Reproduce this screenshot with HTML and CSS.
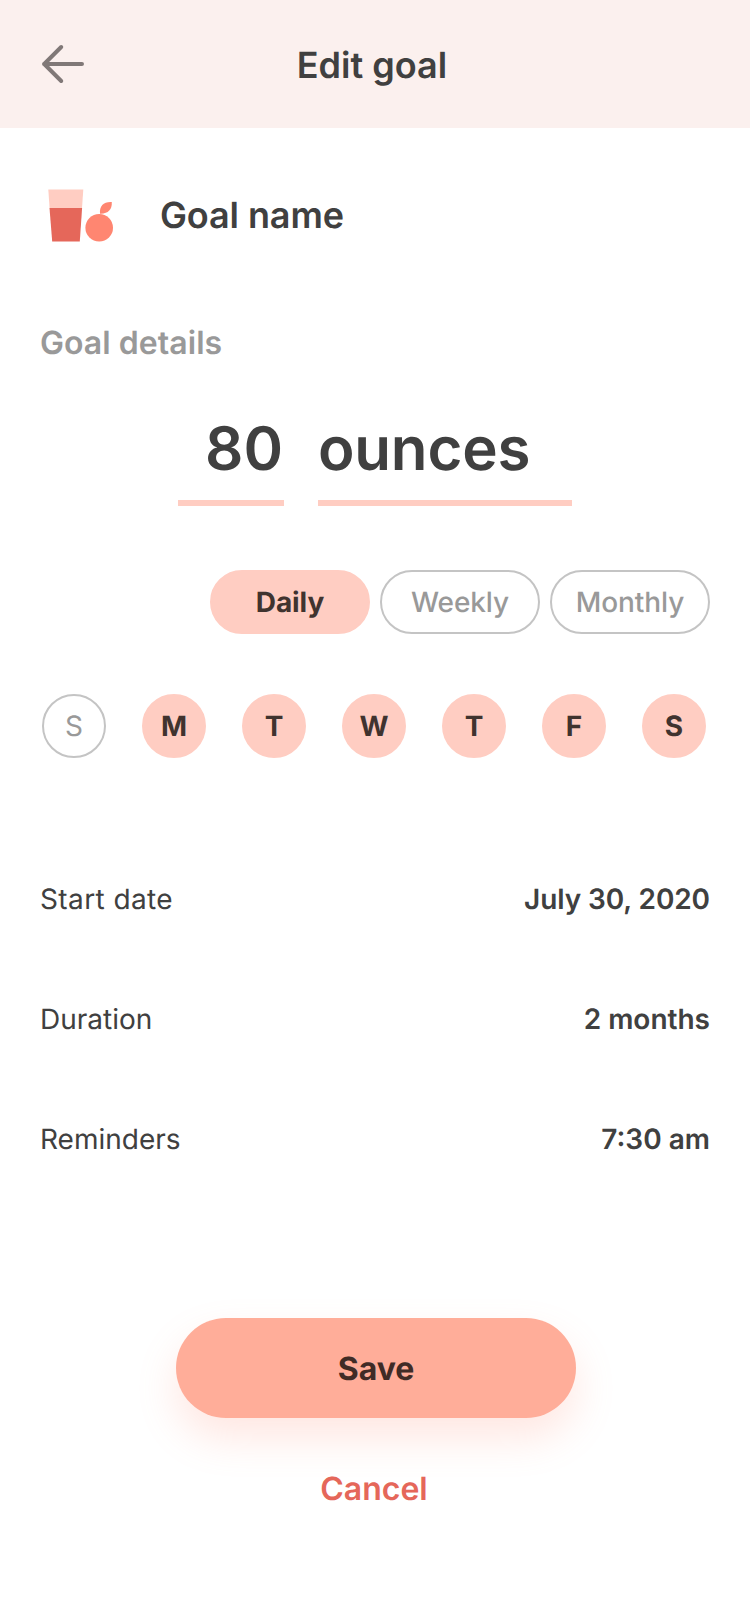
FILE: index.html
```html
<!DOCTYPE html>
<html lang="en">
<head>
<meta charset="utf-8">
<title>Edit goal</title>
<link rel="stylesheet" href="styles.css">
</head>
<body>
<header class="topbar">
  <button class="back" aria-label="Back">
    <svg width="44" height="40" viewBox="0 0 44 40" fill="none" stroke="#807877" stroke-width="4" stroke-linecap="round" stroke-linejoin="round"><path d="M41 20H3M20.2 3 3.2 20l17 17"/></svg>
  </button>
  <h1 class="title">Edit goal</h1>
</header>
<main class="content">
  <section class="goal">
    <svg class="goal-icon" width="66" height="53" viewBox="0 0 66 53">
      <path fill="#ffcdc2" d="M0.3 0.4h35l-1.3 18.8h-32.4z"/>
      <path fill="#e5675a" d="M1.5 19h32.6l-2.3 33.4h-27.6z"/>
      <circle cx="51.2" cy="38.8" r="13.8" fill="#ff8671"/>
      <path fill="#ff8671" d="M52 24.7C51.2 16.8 55.8 12.6 63.8 13.1C64.2 20.8 60 25 52 24.7z"/>
    </svg>
    <h2 class="goal-name">Goal name</h2>
  </section>
  <h3 class="section-title">Goal details</h3>
  <section class="target">
    <span class="amount">80</span>
    <span class="unit">ounces</span>
  </section>
  <section class="periods">
    <button class="pill selected">Daily</button>
    <button class="pill">Weekly</button>
    <button class="pill">Monthly</button>
  </section>
  <section class="days">
    <button class="day">S</button>
    <button class="day selected">M</button>
    <button class="day selected">T</button>
    <button class="day selected">W</button>
    <button class="day selected">T</button>
    <button class="day selected">F</button>
    <button class="day selected">S</button>
  </section>
  <dl class="settings">
    <div class="row start"><dt>Start date</dt><dd>July 30, 2020</dd></div>
    <div class="row"><dt>Duration</dt><dd>2 months</dd></div>
    <div class="row"><dt>Reminders</dt><dd>7:30 am</dd></div>
  </dl>
</main>
<footer class="actions">
  <button class="save">Save</button>
  <button class="cancel">Cancel</button>
</footer>
</body>
</html>
```

FILE: styles.css
```css
* {
  box-sizing: border-box;
  margin: 0;
  padding: 0;
}

body {
  width: 750px;
  height: 1624px;
  overflow: hidden;
  background: #fff;
  color: #404040;
  font-family: Inter, "Liberation Sans", sans-serif;
  text-rendering: geometricPrecision;
}

button {
  border: 0;
  background: none;
  font: inherit;
  color: inherit;
  text-rendering: inherit;
}

.topbar {
  display: grid;
  grid-template-columns: 1fr auto 1fr;
  align-items: center;
  height: 128px;
  padding: 0 47px 0 41px;
  background: #fbf0ee;
}

.back {
  width: 44px;
  height: 40px;
}

.back svg {
  display: block;
}

.title {
  padding-top: 2px;
  font-size: 36px;
  line-height: 44px;
  font-weight: 600;
}

.content {
  padding: 0 40px;
}

.goal {
  display: flex;
  align-items: flex-start;
  height: 54px;
  margin-top: 61px;
  padding-left: 8px;
}

.goal-name {
  margin-left: 46px;
  padding-top: 4px;
  font-size: 36px;
  line-height: 44px;
  font-weight: 600;
  letter-spacing: -0.1px;
}

.section-title {
  margin-top: 80px;
  font-size: 32px;
  line-height: 40px;
  font-weight: 600;
  letter-spacing: 0.05px;
  color: #999;
}

.target {
  display: flex;
  gap: 34px;
  margin: 49px 0 0 138px;
  font-size: 60px;
  line-height: 74px;
  font-weight: 600;
}

.amount,
.unit {
  height: 94px;
  border-bottom: 6px solid #ffcdc2;
}

.amount {
  width: 106px;
  padding-right: 1px;
  text-align: right;
}

.unit {
  width: 254px;
  letter-spacing: -0.2px;
}

.periods {
  display: flex;
  justify-content: flex-end;
  gap: 10px;
  margin-top: 64px;
}

.pill,
.day {
  height: 64px;
  border: 2px solid #c4c4c4;
  border-radius: 32px;
  color: #999;
  font-size: 28px;
  line-height: 34px;
}

.pill {
  width: 160px;
  font-weight: 500;
  letter-spacing: -0.1px;
}

.day {
  width: 64px;
}

.pill.selected,
.day.selected {
  border-color: #ffcdc2;
  background: #ffcdc2;
  color: #40332f;
  font-weight: 700;
}

.days {
  display: flex;
  gap: 36px;
  margin: 60px 0 0 2px;
}

.settings {
  display: grid;
  gap: 86px;
  margin-top: 124px;
  font-size: 28px;
  line-height: 34px;
}

.row {
  display: flex;
  justify-content: space-between;
}

.row dd {
  font-weight: 600;
}

.start dt {
  letter-spacing: 0.4px;
}

.start dd {
  letter-spacing: -0.1px;
}

.actions {
  display: flex;
  flex-direction: column;
  align-items: center;
  margin-top: 162px;
  padding-left: 2px;
  font-size: 32px;
  line-height: 40px;
}

.save {
  width: 400px;
  height: 100px;
  padding-top: 2px;
  border-radius: 50px;
  background: #ffad99;
  box-shadow: 0 20px 40px rgba(255, 133, 112, 0.2);
  color: #402b26;
  font-weight: 700;
}

.cancel {
  margin-top: 51px;
  padding-right: 4px;
  color: #e5675a;
  font-weight: 600;
}
```
